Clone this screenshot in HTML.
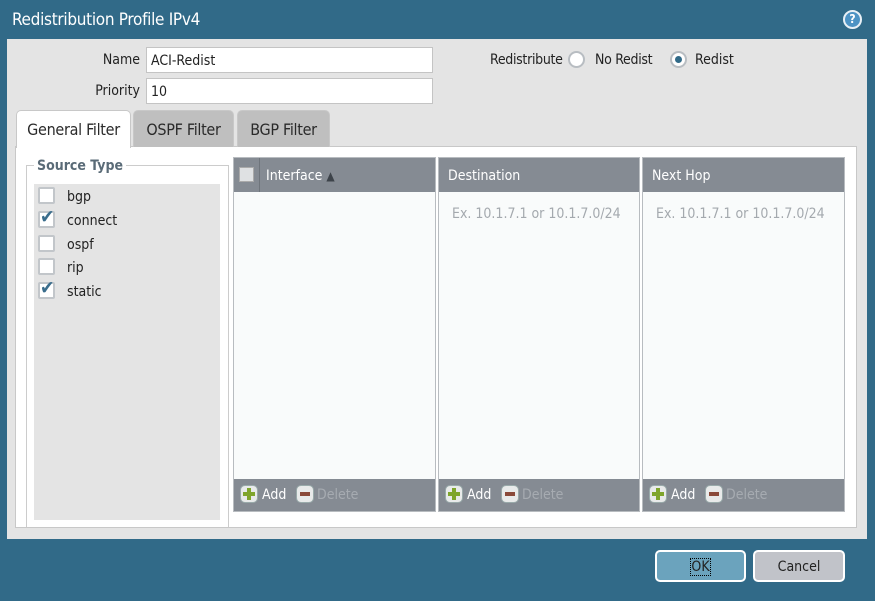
<!DOCTYPE html>
<html><head><style>
*{box-sizing:border-box;margin:0;padding:0}
body{width:875px;height:601px;background:#316a88;font-family:"DejaVu Sans Condensed","Liberation Sans Narrow","Liberation Sans",sans-serif;font-size:14px;color:#222;position:relative;overflow:hidden}
.a{position:absolute}
.title{left:12px;top:10px;color:#fff;font-size:17px;letter-spacing:-0.3px}
.help{left:843px;top:10px;width:19px;height:19px;border-radius:50%;background:#4d93c4;border:2px solid #e8f0f6;color:#fff;font-size:12px;font-weight:bold;text-align:center;line-height:15px}
.panel{left:7px;top:39px;width:860px;height:500px;background:#e4e4e4}
.lbl{text-align:right;width:100px;font-size:14px}
.inp{background:#fff;border:1px solid #c4c4c4;height:26px;padding:5px 4px;font-size:14px}
.radio{width:17px;height:17px;border-radius:50%;border:2px solid #b8bdc2;background:#fff}
.tab{top:110px;height:37px;border:1px solid #c8c8c8;border-bottom:none;border-radius:5px 5px 0 0;background:#bfbfbf;font-size:16px;text-align:center;line-height:38px;color:#2a2a2a;letter-spacing:-0.3px}
.content{left:15px;top:146px;width:842px;height:382px;background:#fff;border:1px solid #c8c8c8}
.fs{left:26px;top:165px;width:203px;height:362px;border:1px solid #ccc;border-bottom:none}
.leg{left:34px;top:158px;background:#fff;padding:0 3px;color:#5a6b77;font-weight:bold;font-size:14px}
.list{left:34px;top:184px;width:186px;height:336px;background:#e4e4e4}
.cb{width:17px;height:17px;background:#fff;border:2px solid #c2c6ca;border-radius:2px}
.item{font-size:14px}
.col{top:157px;height:355px;background:#f9fbfb;border:1px solid #b8bcc0}
.hd{left:0;top:0;right:0;height:34px;background:#858b93;color:#fff;font-size:14px;line-height:36px}
.ft{left:0;bottom:0;right:0;height:32px;background:#858b93;font-size:14px}
.ph{color:#a4a9ae;font-size:14px}
.plus,.minus{top:6px;width:18px;height:18px;border-radius:5px;background:#e8eaea;border:1px solid #9aa}
.plus::before{content:"";position:absolute;left:6px;top:2px;width:4px;height:12px;background:#7fa52c}
.plus::after{content:"";position:absolute;left:2px;top:6px;width:12px;height:4px;background:#7fa52c}
.minus::after{content:"";position:absolute;left:3px;top:6px;width:10px;height:4px;background:#8a4a3a}
.btn{top:550px;height:32px;border:2px solid #fff;border-radius:5px;font-size:14px;text-align:center;line-height:30px}
.chk{left:0px;top:-7px;color:#3a6d8c;font-size:19px;font-weight:bold}
</style></head><body>
<div class="a title">Redistribution Profile IPv4</div>
<div class="a help">?</div>
<div class="a panel"></div>
<div class="a lbl" style="left:40px;top:52px">Name</div>
<div class="a inp" style="left:146px;top:47px;width:287px">ACI-Redist</div>
<div class="a lbl" style="left:40px;top:83px">Priority</div>
<div class="a inp" style="left:146px;top:78px;width:287px">10</div>
<div class="a" style="left:490px;top:52px;letter-spacing:-0.3px">Redistribute</div>
<div class="a radio" style="left:568px;top:51px"></div>
<div class="a" style="left:595px;top:52px;letter-spacing:-0.3px">No Redist</div>
<div class="a radio" style="left:670px;top:51px"><div class="a" style="left:3px;top:3px;width:7px;height:7px;border-radius:50%;background:#316a88"></div></div>
<div class="a" style="left:695px;top:52px">Redist</div>
<div class="a content"></div>
<div class="a tab" style="left:16px;width:115px;background:#fff;height:38px">General Filter</div>
<div class="a tab" style="left:133px;width:101px">OSPF Filter</div>
<div class="a tab" style="left:237px;width:93px">BGP Filter</div>
<div class="a fs"></div>
<div class="a leg">Source Type</div>
<div class="a list"></div>
<div class="a cb" style="left:38px;top:187px"></div><div class="a item" style="left:67px;top:189px">bgp</div>
<div class="a cb" style="left:38px;top:211px"><span class="a chk">✔</span></div><div class="a item" style="left:67px;top:213px">connect</div>
<div class="a cb" style="left:38px;top:235px"></div><div class="a item" style="left:67px;top:237px">ospf</div>
<div class="a cb" style="left:38px;top:258px"></div><div class="a item" style="left:67px;top:260px">rip</div>
<div class="a cb" style="left:38px;top:282px"><span class="a chk">✔</span></div><div class="a item" style="left:67px;top:284px">static</div>

<div class="a col" style="left:233px;width:203px">
 <div class="a hd"><div class="a" style="left:5px;top:9px;width:15px;height:15px;background:#dfe1e3;border:1px solid #aaa"></div><div class="a" style="left:25px;top:0;bottom:0;border-left:1px solid #6f757c"></div><span class="a" style="left:32px">Interface <span style="font-size:12px;color:#3d434a">▲</span></span></div>
 <div class="a ft"><div class="a plus" style="left:6px"></div><span class="a" style="left:28px;top:8px;color:#fff">Add</span><div class="a minus" style="left:62px"></div><span class="a" style="left:83px;top:8px;color:#a6abb1">Delete</span></div>
</div>
<div class="a col" style="left:438px;width:202px">
 <div class="a hd"><span class="a" style="left:9px">Destination</span></div>
 <div class="a ph" style="left:13px;top:48px">Ex. 10.1.7.1 or 10.1.7.0/24</div>
 <div class="a ft"><div class="a plus" style="left:6px"></div><span class="a" style="left:28px;top:8px;color:#fff">Add</span><div class="a minus" style="left:62px"></div><span class="a" style="left:83px;top:8px;color:#a6abb1">Delete</span></div>
</div>
<div class="a col" style="left:642px;width:203px">
 <div class="a hd"><span class="a" style="left:9px">Next Hop</span></div>
 <div class="a ph" style="left:13px;top:48px">Ex. 10.1.7.1 or 10.1.7.0/24</div>
 <div class="a ft"><div class="a plus" style="left:6px"></div><span class="a" style="left:28px;top:8px;color:#fff">Add</span><div class="a minus" style="left:62px"></div><span class="a" style="left:83px;top:8px;color:#a6abb1">Delete</span></div>
</div>
<div class="a btn" style="left:655px;width:91px;background:#6ba3bd"><span style="outline:1px dotted #000">OK</span></div>
<div class="a btn" style="left:753px;width:92px;background:#c1c3c9">Cancel</div>
</body></html>
